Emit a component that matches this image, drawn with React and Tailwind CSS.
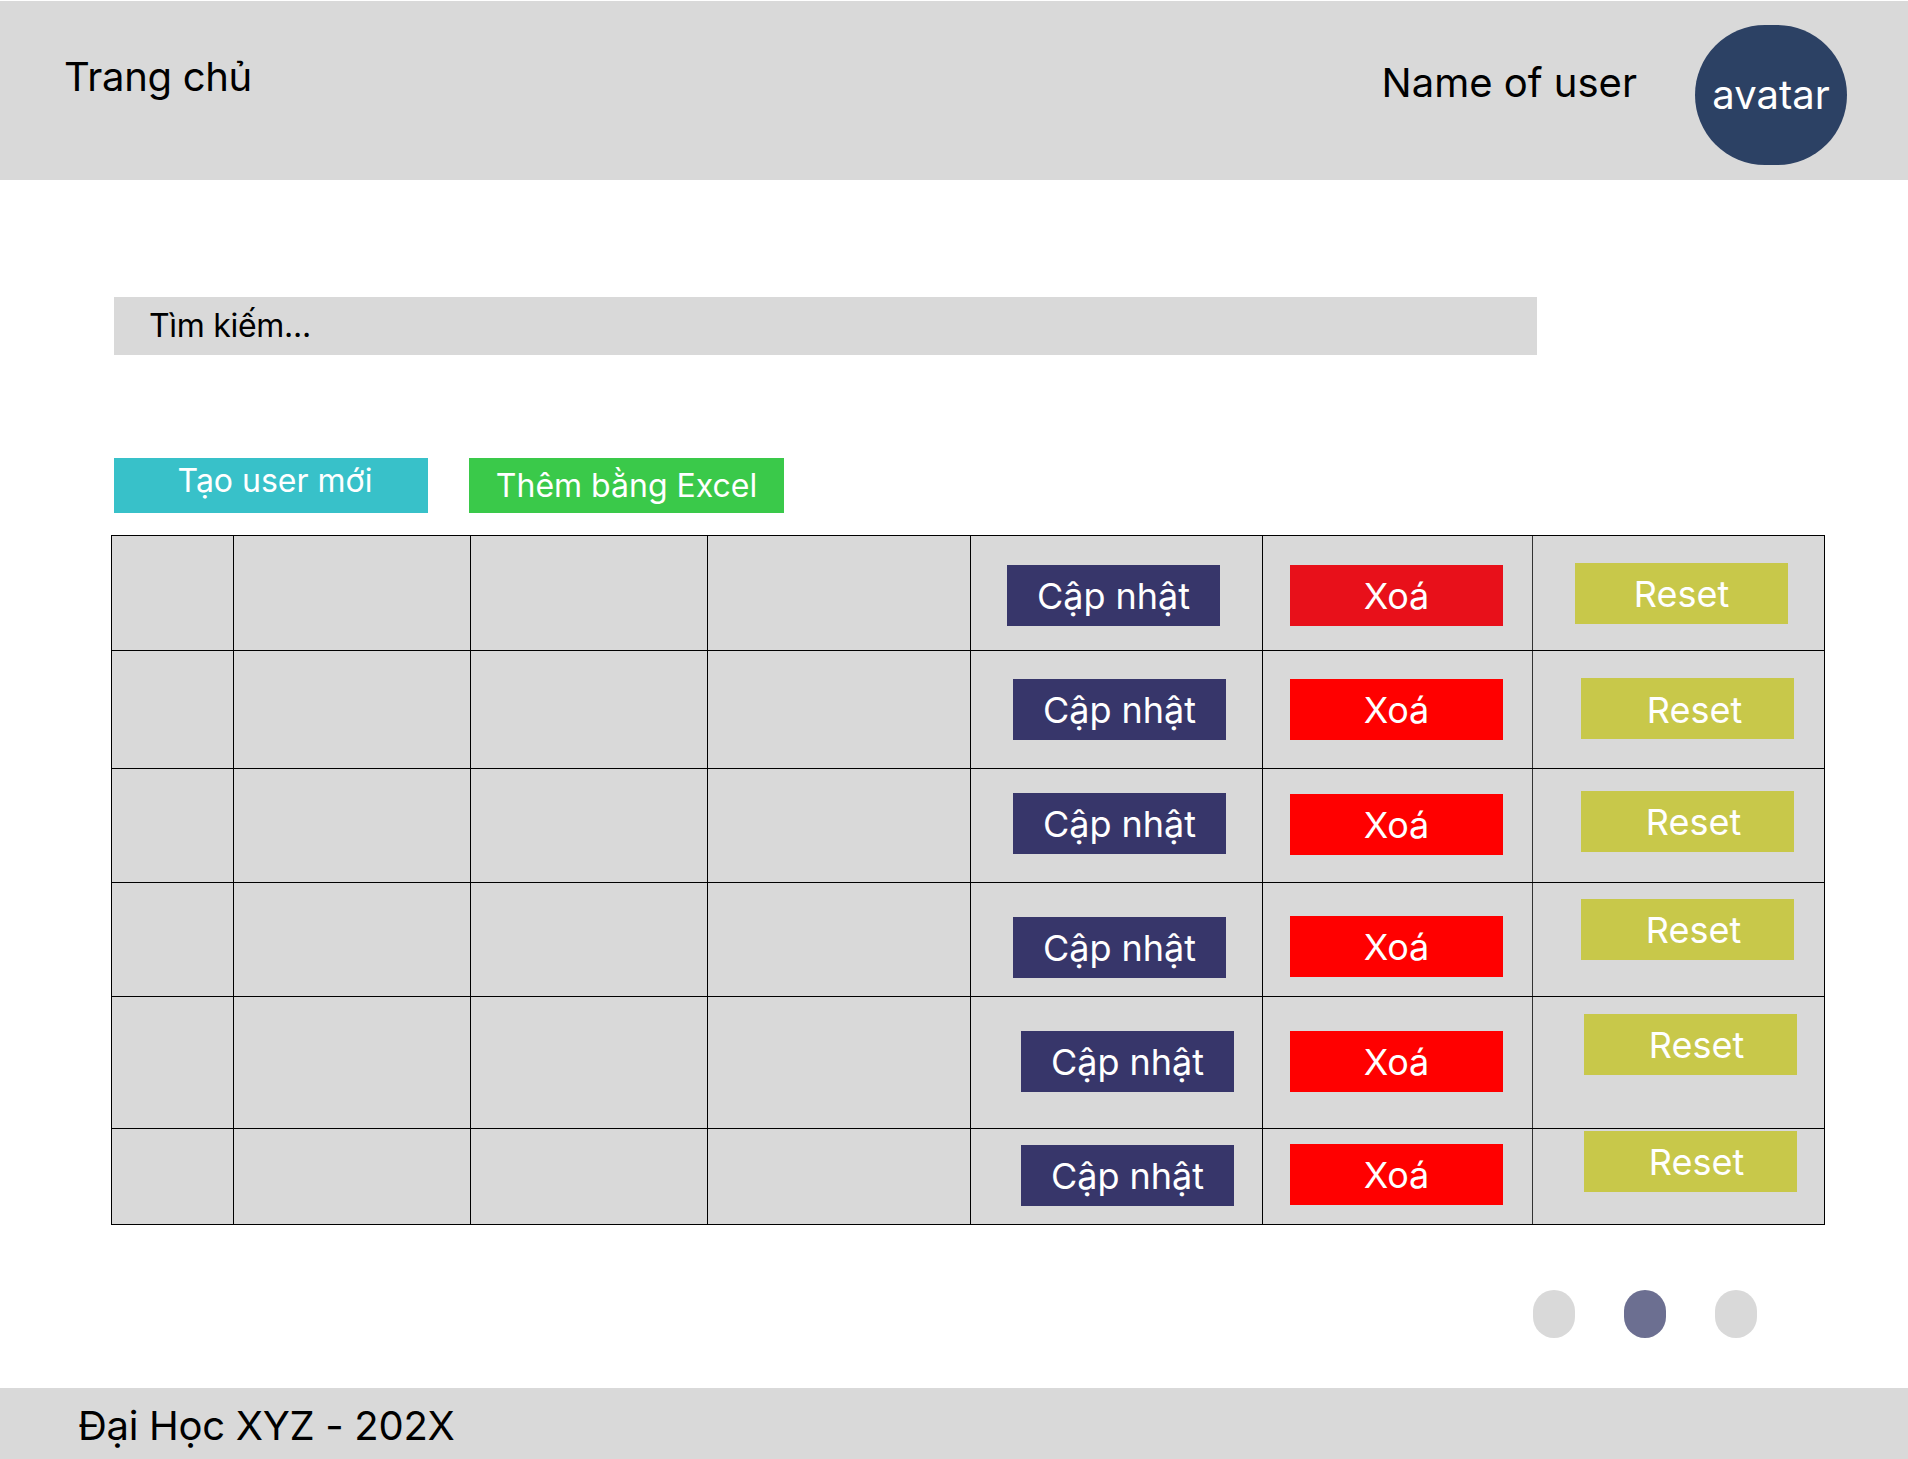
import React from "react";

const rows = [
  { h: "h-[115px]", border: true, c: "pl-[36px] pt-[29px]", x: "pt-[29px]", xc: "bg-[#e8101a]", r: "pl-[42px] pt-[27px]", rs: "" },
  { h: "h-[118px]", border: true, c: "pl-[42px] pt-[28px]", x: "pt-[28px]", xc: "bg-[#ff0000]", r: "pl-[48px] pt-[27px]", rs: "pl-[14px] pt-[3px]" },
  { h: "h-[114px]", border: true, c: "pl-[42px] pt-[24px]", x: "pt-[25px]", xc: "bg-[#ff0000]", r: "pl-[48px] pt-[22px]", rs: "pl-[12px]" },
  { h: "h-[114px]", border: true, c: "pl-[42px] pt-[34px]", x: "pt-[33px]", xc: "bg-[#ff0000]", r: "pl-[48px] pt-[16px]", rs: "pl-[12px]" },
  { h: "h-[132px]", border: true, c: "pl-[50px] pt-[34px]", x: "pt-[34px]", xc: "bg-[#ff0000]", r: "pl-[51px] pt-[17px]", rs: "pl-[12px]" },
  { h: "h-[95px]", border: false, c: "pl-[50px] pt-[16px]", x: "pt-[15px]", xc: "bg-[#ff0000]", r: "pl-[51px] pt-[2px]", rs: "pl-[12px]" },
];

function Btn({ color, extra = "", children }) {
  return (
    <div className={`w-[213px] h-[61px] flex items-center justify-center text-white text-[36px] leading-[44px] ${color} ${extra}`}>
      {children}
    </div>
  );
}

export default function App() {
  return (
    <div className="w-[1908px] h-[1459px] bg-white flex flex-col font-['Inter',sans-serif] text-black pt-[1px]">
      {/* Header */}
      <header className="h-[179px] bg-[#d9d9d9] flex items-start shrink-0">
        <div className="pl-[64px] pt-[52px] text-[40px] leading-[48px] tracking-[-0.3px]">Trang chủ</div>
        <div className="flex-1" />
        <div className="pt-[58px] text-[40px] leading-[48px]">Name of user</div>
        <div className="ml-[58px] mr-[61px] mt-[24px] w-[152px] h-[140px] rounded-full bg-[#2c4164] flex items-center justify-center text-white text-[40px] leading-[48px]">
          avatar
        </div>
      </header>

      {/* Main */}
      <main className="flex-1 flex flex-col">
        <div className="mt-[117px] ml-[114px] w-[1423px] h-[58px] bg-[#d9d9d9] flex items-center pl-[35px] text-[32px] leading-[40px] tracking-[-0.3px]">
          Tìm kiếm...
        </div>

        <div className="mt-[103px] ml-[114px] flex gap-[41px]">
          <div className="w-[314px] h-[55px] bg-[#38c1c9] flex items-start justify-center pl-[8px] pt-[3px] text-white text-[32px] leading-[40px]">
            Tạo user mới
          </div>
          <div className="w-[315px] h-[55px] bg-[#3ac94a] flex items-center justify-center text-white text-[32px] leading-[40px]">
            Thêm bằng Excel
          </div>
        </div>

        <div className="mt-[22px] ml-[111px] w-[1714px] border border-black bg-[#d9d9d9] flex flex-col">
          {rows.map((row, i) => (
            <div key={i} className={`flex ${row.h} ${row.border ? "border-b border-black" : ""}`}>
              <div className="w-[122px] border-r border-black" />
              <div className="w-[237px] border-r border-black" />
              <div className="w-[237px] border-r border-black" />
              <div className="w-[263px] border-r border-black" />
              <div className={`w-[292px] border-r border-black ${row.c}`}>
                <Btn color="bg-[#37366a]">Cập nhật</Btn>
              </div>
              <div className={`w-[270px] border-r border-[#333333] pl-[27px] ${row.x}`}>
                <Btn color={row.xc}>Xoá</Btn>
              </div>
              <div className={`w-[291px] ${row.r}`}>
                <Btn color="bg-[#c8c84a]" extra={row.rs}>Reset</Btn>
              </div>
            </div>
          ))}
        </div>

        <div className="mt-[65px] flex justify-end pr-[151px] gap-[49px]">
          <div className="w-[42px] h-[48px] rounded-full bg-[#d9d9d9]" />
          <div className="w-[42px] h-[48px] rounded-full bg-[#6c6f91]" />
          <div className="w-[42px] h-[48px] rounded-full bg-[#d9d9d9]" />
        </div>
      </main>

      {/* Footer */}
      <footer className="h-[71px] bg-[#d9d9d9] shrink-0 pl-[78px] pt-[14px] text-[40px] leading-[48px] tracking-[-0.3px]">
        Đại Học XYZ - 202X
      </footer>
    </div>
  );
}
